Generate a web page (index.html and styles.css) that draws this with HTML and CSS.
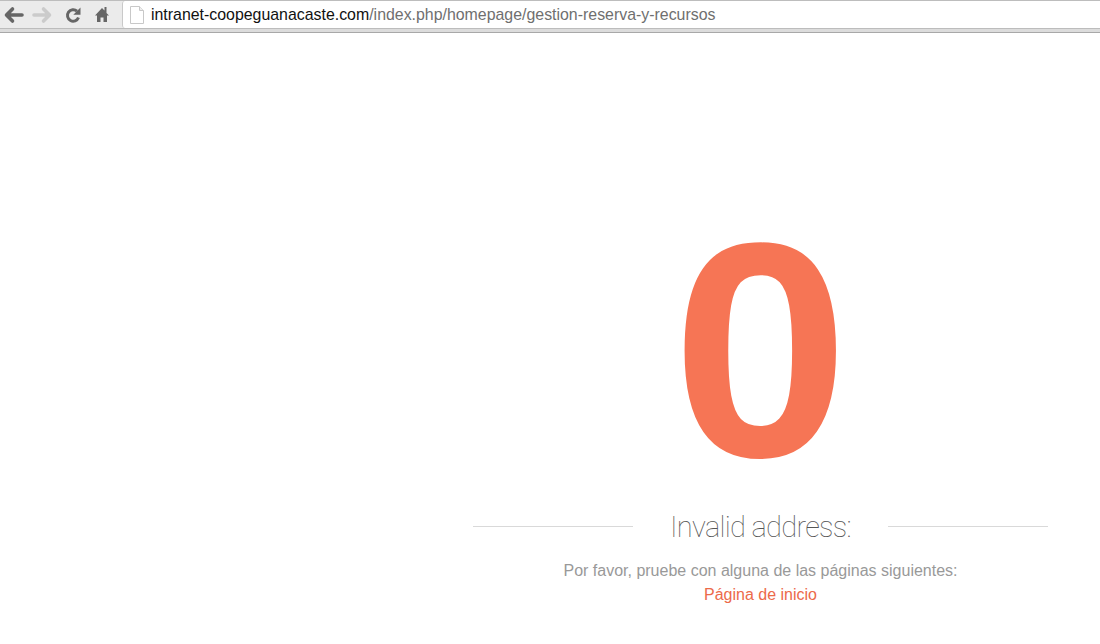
FILE: index.html
```html
<!DOCTYPE html>
<html lang="en">
<head>
  <meta charset="UTF-8" />
  <title>Invalid address</title>
  <link rel="stylesheet" href="styles.css">
</head>
<body>

  <div class="toolbar">
    <svg class="nav-icon" width="29" height="18" viewBox="0 0 29 18"><path d="M22 9H8M12.500 3 6.500 9l6 6" fill="none" stroke="#666" stroke-width="3.600" stroke-linecap="round" stroke-linejoin="round"/></svg>
    <svg class="nav-icon" width="29" height="18" viewBox="0 0 29 18"><path d="M5 9h14M14.500 3l6 6-6 6" fill="none" stroke="#cbcbcb" stroke-width="3.600" stroke-linecap="round" stroke-linejoin="round"/></svg>
    <svg class="nav-icon" width="29" height="18" viewBox="0 0 29 18"><path d="M20.500 11.500A5.700 5.700 0 1 1 19 5.200" fill="none" stroke="#666" stroke-width="3"/><path d="M22.500 1.500v7.200H15.300z" fill="#666"/></svg>
    <svg class="nav-icon" width="29" height="18" viewBox="0 0 29 18"><path d="M15 2 8 9.500h2V16h3.500v-4.500h3V16H20V9.500h2L19.500 7V1h-2v3.500z" fill="#666"/></svg>
    <div class="address-bar">
      <svg class="page-icon" width="14" height="18" viewBox="0 0 14 18"><path d="M.5.500h9l4 4v13H.5z" fill="#fff" stroke="#c8c8c8"/><path d="M9.500.500v4h4" fill="#eee" stroke="#c8c8c8"/></svg>
      <span class="url"><span class="host">intranet-coopeguanacaste.com</span>/index.php/homepage/gestion-reserva-y-recursos</span>
    </div>
  </div>

  <div class="page">
    <div class="error-box">
      <div class="error-code">0</div>
      <div class="error-title">
        <span class="rule"></span>
        <h1>Invalid address:</h1>
        <span class="rule"></span>
      </div>
      <p>Por favor, pruebe con alguna de las páginas siguientes:</p>
      <a href="#">Página de inicio</a>
    </div>
  </div>

</body>
</html>
```

FILE: styles.css
```css
html, body {
  margin: 0;
  height: 100%;
  overflow: hidden;
}

body {
  font-family: 'Liberation Sans', Arial, sans-serif;
  background-color: #fff;
}

.toolbar {
  display: flex;
  align-items: center;
  height: 27px;
  background-color: #ebebeb;
  border-top: 1px solid #bdbdbd;
  border-bottom: 1px solid #bcbcbc;
  box-shadow: 0 3px 0 #dcdcdc, 0 4px 0 #a8a8a8;
  margin-bottom: 4px;
}

.nav-icon {
  flex: none;
}

.address-bar {
  display: flex;
  align-items: center;
  flex: 1;
  height: 27px;
  margin-left: 6px;
  padding-left: 7px;
  background-color: #fff;
  border-radius: 3px 0 0 3px;
  border-left: 1px solid #c9c9c9;
}

.page-icon {
  margin-right: 7px;
}

.url {
  font-size: 15.9px;
  color: #6f6f6f;
}

.host {
  color: #111;
}

.page {
  display: flex;
  justify-content: flex-end;
  padding-right: 52px;
}

.error-box {
  width: 575px;
  text-align: center;
}

.error-code {
  margin-top: 172px;
  font-size: 306px;
  line-height: 290px;
  font-weight: bold;
  color: #f67555;
  transform: scaleX(1.04);
}

.error-title {
  display: flex;
  align-items: center;
  justify-content: space-between;
  margin-top: 13px;
}

.rule {
  width: 160px;
  height: 1px;
  background-color: #d9d9d9;
}

h1 {
  margin: 2px 0 0;
  font-family: Roboto, sans-serif;
  font-size: 29px;
  font-weight: 100;
  letter-spacing: -0.7px;
  color: #555;
}

p {
  margin: 18px 0 0;
  font-size: 16px;
  color: #999;
}

a {
  display: block;
  margin-top: 6px;
  font-size: 16px;
  color: #ec6a4a;
  text-decoration: none;
}
```
